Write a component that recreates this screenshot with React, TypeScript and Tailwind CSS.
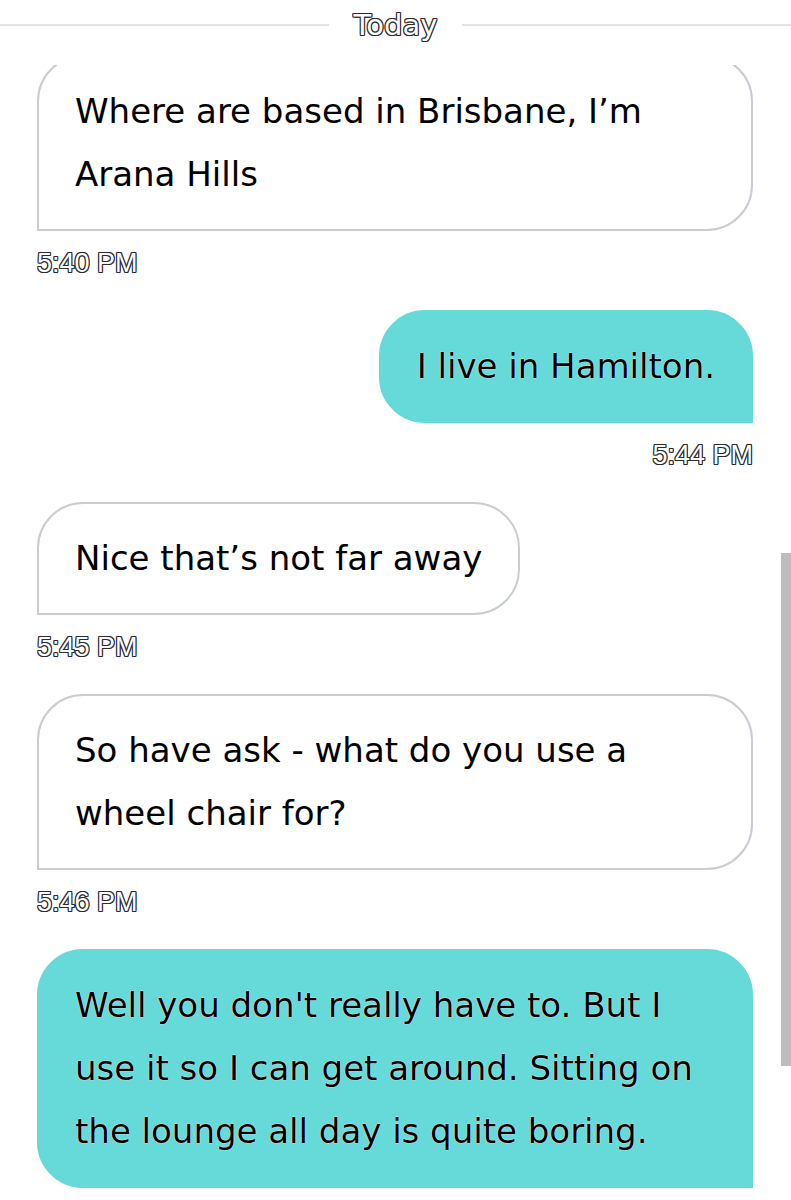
import React from 'react';

type Message = {
  id: number;
  text: string;
  time: string;
  mine: boolean;
  wide?: boolean;
};

const messages: Message[] = [
  { id: 1, text: 'Where are based in Brisbane, I\u2019m Arana Hills', time: '5:40 PM', mine: false, wide: true },
  { id: 2, text: 'I live in Hamilton.', time: '5:44 PM', mine: true },
  { id: 3, text: 'Nice that\u2019s not far away', time: '5:45 PM', mine: false },
  { id: 4, text: 'So have ask - what do you use a wheel chair for?', time: '5:46 PM', mine: false, wide: true },
  {
    id: 5,
    text: "Well you don't really have to. But I use it so I can get around. Sitting on the lounge all day is quite boring.",
    time: '',
    mine: true,
    wide: true,
  },
];

// outlined look used for the timestamps and the day label
const outlined =
  'text-white [text-shadow:-1px_-1px_0_#2b2b2b,1px_-1px_0_#2b2b2b,-1px_1px_0_#2b2b2b,1px_1px_0_#2b2b2b,0_1px_0_#2b2b2b,0_-1px_0_#2b2b2b,1px_0_0_#2b2b2b,-1px_0_0_#2b2b2b]';

const Bubble = ({ msg }: { msg: Message }) => {
  const base =
    'border-2 px-[36px] py-[23px] text-[34px] leading-[63px] text-black font-["DejaVu_Sans",sans-serif]';
  const look = msg.mine
    ? 'bg-[#66d9d9] border-[#66d9d9] rounded-[46px] rounded-br-none [text-shadow:0_0_1px_#fff,0_0_1px_#fff]'
    : 'bg-white border-[#c8cdd2] rounded-[46px] rounded-bl-none';

  return (
    <div className={`flex flex-col ${msg.mine ? 'items-end' : 'items-start'}`}>
      <div className={`${base} ${look} ${msg.wide ? 'w-full' : ''}`}>
        <p className={msg.wide ? 'max-w-[630px]' : ''}>{msg.text}</p>
      </div>
      {msg.time && (
        <span
          className={`mt-[16px] mb-[31px] text-[27px] leading-[32px] font-["Liberation_Sans",Arial,sans-serif] ${outlined}`}
        >
          {msg.time}
        </span>
      )}
    </div>
  );
};

const App = () => {
  return (
    <div className="relative w-[791px] h-[1200px] overflow-hidden bg-white">
      <div className="absolute top-0 inset-x-0 h-[65px] bg-white z-10">
        <div className="flex items-center h-[50px] gap-[25px]">
          <div className="flex-1 h-[2px] bg-[#e1e3e4]" />
          <span className={`text-[29px] leading-[32px] font-["DejaVu_Sans",sans-serif] ${outlined}`}>Today</span>
          <div className="flex-1 h-[2px] bg-[#e1e3e4]" />
        </div>
      </div>

      <div className="flex flex-col pt-[55px] pl-[37px] pr-[38px]">
        {messages.map((m) => (
          <Bubble key={m.id} msg={m} />
        ))}
      </div>

      <div className="absolute right-0 top-[553px] w-[10px] h-[513px] bg-[#bdbdbd]" />
    </div>
  );
};

export default App;
